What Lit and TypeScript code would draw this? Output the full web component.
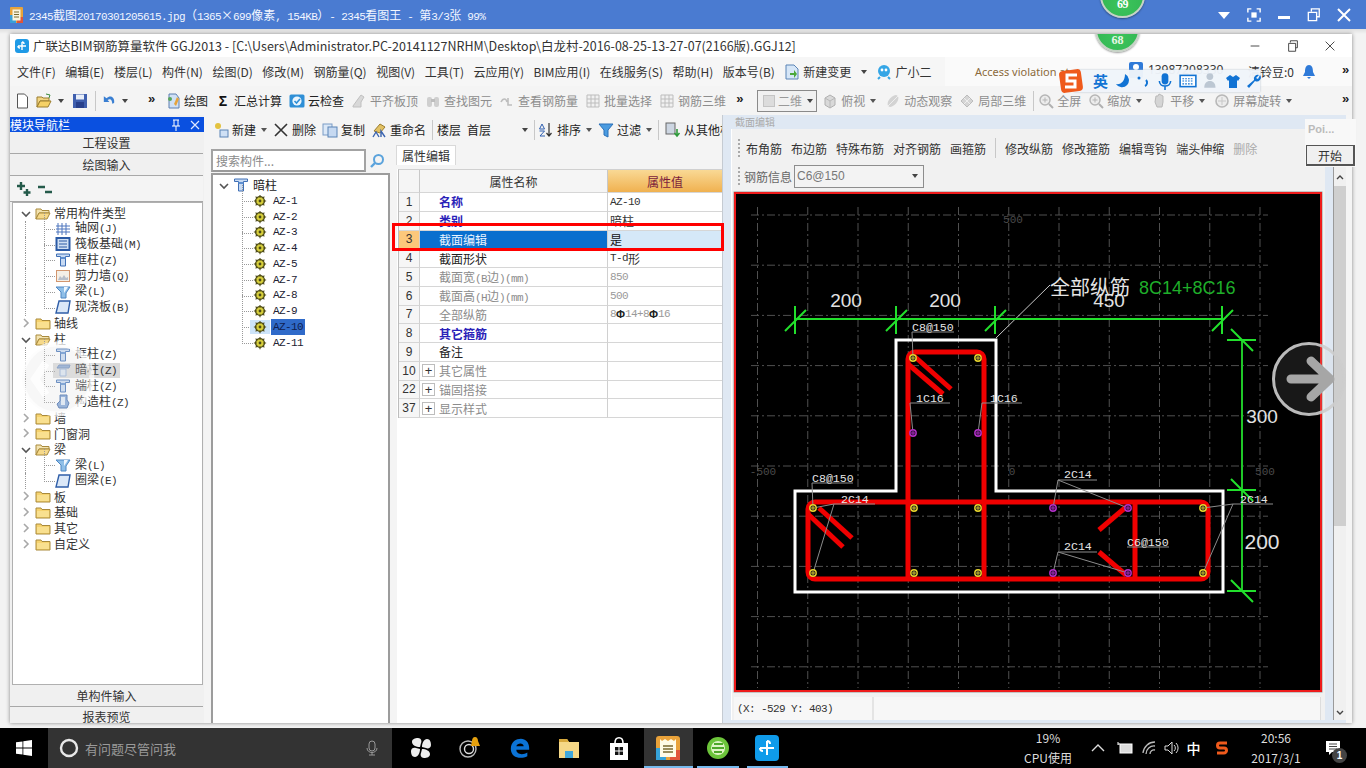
import { LitElement, html, css, svg } from 'lit';
import { customElement } from 'lit/decorators.js';

const ic = (body: unknown, w = 16, h = 16, vb = '0 0 16 16') =>
  html`<svg class="ic" width=${w} height=${h} viewBox=${vb}>${body}</svg>`;

// the original UI font has half-width latin, so latin runs get their own narrow class
const mix = (s: string) =>
  s.split(/([\x20-\x7e]+)/).filter(Boolean).map((p) => (/^[\x20-\x7e]/.test(p) ? html`<span class="a">${p}</span>` : p));

const folderShut = ic(svg`<path d="M1 4h5l1 1.500h8V14H1z" fill="#f6d36f" stroke="#a98a3c"/><path d="M2 7h12v6H2z" fill="#f9e08f"/>`);
const folderOpen = ic(svg`<path d="M1 4h5l1 1.500h7V8H4L1 14z" fill="#f3e3b0" stroke="#a98a3c"/><path d="M4 8h11l-3 6H1z" fill="#f6d98a" stroke="#a98a3c"/>`);
const column = ic(svg`<path d="M1.500 2h13v2.500h-4V14h-5V4.500h-4z" fill="#c7daf3" stroke="#3f6fb5"/><path d="M5.500 5h5v2h-5z" fill="#5e8fd0"/>`);
const hiddenCol = ic(svg`<path d="M2 6h12l1-3H4z" fill="#7d9fd0" stroke="#5a7fb8"/><path d="M5 7h6v7H5z" fill="#dbe7f7" stroke="#8aa9d5"/>`);
const axisGrid = ic(svg`<path d="M3 2v12M7 2v12M11 2v12M1 5h14M1 8h14M1 11h14" stroke="#4c74bd" fill="none"/>`);
const raft = ic(svg`<rect x="1.500" y="2" width="13" height="12" fill="#cfdff3" stroke="#2b5aa5" stroke-width="2"/><path d="M4 5h8M4 8h8M4 11h8" stroke="#2b5aa5"/>`);
const wall = ic(svg`<rect x="1.500" y="2.500" width="13" height="11" fill="#f4efe6" stroke="#d2966e"/><path d="M3 12l2-4 2 2 2-3 2 3 2-1v3z" fill="#b8bfc9"/>`);
const beam = ic(svg`<path d="M1 3h14l-4 6v5H6V8z" fill="#8fbfe8" stroke="#4c86c3"/><path d="M9 3l4 0-4 6z" fill="#eef6fd"/>`);
const slab = ic(svg`<path d="M4 2h11l-2 12H1z" fill="#dbe8f8" stroke="#2f5ea8" stroke-width="1.400"/>`);
const constr = ic(svg`<path d="M5 1h7v5l2 3-2 5H4L2 10l3-3z" fill="#7ea3d6" stroke="#3f69ab"/><path d="M6 3h4v8H6z" fill="#dfeaf8"/>`);
const gear = ic(svg`<circle cx="8" cy="8" r="5" fill="#d7cf3c" stroke="#4c4a16" stroke-width="1.600"/><circle cx="8" cy="8" r="1.600" fill="#4c4a16"/><path d="M8 1v3M8 12v3M1 8h3M12 8h3M3 3l2 2M11 11l2 2M13 3l-2 2M5 11l-2 2" stroke="#4c4a16" stroke-width="1.300"/>`, 14, 14);

const caretDown = ic(svg`<path d="M2 5l4 4 4-4" fill="none" stroke="#555" stroke-width="1.600"/>`, 12, 12, '0 0 12 12');
const caretRight = ic(svg`<path d="M4 2l4 4-4 4" fill="none" stroke="#a8a8a8" stroke-width="1.600"/>`, 12, 12, '0 0 12 12');
const drop = html`<i class="drop"></i>`;

const grayBox = ic(svg`<path d="M3 5l5-3 5 3v7l-5 3-5-3z" fill="#d9d9d9" stroke="#b0b0b0"/><path d="M3 5l5 3 5-3M8 8v7" fill="none" stroke="#b8b8b8"/>`);
const grayGlass = ic(svg`<circle cx="7" cy="7" r="5" fill="#ececec" stroke="#b5b5b5" stroke-width="1.400"/><path d="M11 11l4 4" stroke="#b0b0b0" stroke-width="2"/><path d="M4.500 7h5M7 4.500v5" stroke="#b5b5b5"/>`);
const grayHand = ic(svg`<path d="M4 9l1-6 2 0 1-2 2 1 2 1v6l-1 5H6z" fill="#d5d5d5" stroke="#b8b8b8"/>`);
const grayBino = ic(svg`<rect x="2" y="4" width="5" height="10" rx="2" fill="#cfcfcf"/><rect x="9" y="4" width="5" height="10" rx="2" fill="#cfcfcf"/><rect x="6" y="6" width="4" height="3" fill="#bdbdbd"/>`);
const grayTable = ic(svg`<path d="M2 2h12v12H2zM2 6h12M2 10h12M6 2v12M10 2v12" fill="#f1f1f1" stroke="#bdbdbd"/>`);
const grayRot = ic(svg`<circle cx="8" cy="8" r="6" fill="#ececec" stroke="#b8b8b8" stroke-width="1.600"/><path d="M8 4v8M4 8h8" stroke="#c8c8c8"/>`);

interface ToolItem { icon?: unknown; label: string; off?: boolean; caret?: boolean; }

const leftTools: ToolItem[] = [
  { icon: ic(svg`<path d="M4 1l7 0 3 4v10H4z" fill="#cfe0f5" stroke="#5d7fb0"/><path d="M9 11l3-7 2 2-3 7z" fill="#e6a33c"/><circle cx="5" cy="6" r="2" fill="#58a55a"/>`), label: '绘图' },
  { icon: html`<b class="sigma">Σ</b>`, label: '汇总计算' },
  { icon: ic(svg`<rect x="0.500" y="1.500" width="15" height="13" rx="1.500" fill="#2f8fd6"/><circle cx="8" cy="8" r="4.600" fill="#eaf5fd"/><path d="M5.500 8l2 2 3.500-4" stroke="#2f8fd6" stroke-width="1.600" fill="none"/>`), label: '云检查' },
  { icon: ic(svg`<path d="M2 13l5-7 3-4 3 2-3 5v5H2z" fill="#d8d8d8" stroke="#c0c0c0"/>`), label: '平齐板顶', off: true },
  { icon: grayBino, label: '查找图元', off: true },
  { icon: ic(svg`<path d="M2 9c2-4 5-4 6 0M9 5v7h4" stroke="#bdbdbd" stroke-width="1.600" fill="none"/>`), label: '查看钢筋量', off: true },
  { icon: grayTable, label: '批量选择', off: true },
  { icon: grayTable, label: '钢筋三维', off: true },
];

const rightTools: ToolItem[] = [
  { icon: grayBox, label: '俯视', off: true, caret: true },
  { icon: ic(svg`<ellipse cx="8" cy="8" rx="4" ry="7" transform="rotate(40 8 8)" fill="#d3d3d3"/><path d="M3 13L13 3" stroke="#eee"/>`), label: '动态观察', off: true },
  { icon: ic(svg`<path d="M8 2l6 6-6 6-6-6z" fill="#d5d5d5" stroke="#bcbcbc"/><path d="M5 5l6 6M11 5l-6 6" stroke="#eee"/>`), label: '局部三维', off: true },
];

const viewTools: ToolItem[] = [
  { icon: grayGlass, label: '全屏', off: true },
  { icon: grayGlass, label: '缩放', off: true, caret: true },
  { icon: grayHand, label: '平移', off: true, caret: true },
  { icon: grayRot, label: '屏幕旋转', off: true, caret: true },
];

const menus = ['文件(F)', '编辑(E)', '楼层(L)', '构件(N)', '绘图(D)', '修改(M)', '钢筋量(Q)', '视图(V)', '工具(T)', '云应用(Y)', 'BIM应用(I)', '在线服务(S)', '帮助(H)', '版本号(B)'];

interface TreeRow { label: string; icon?: unknown; open?: boolean; last?: boolean; guide?: boolean; hot?: boolean; }

const navTree: TreeRow[] = [
  { label: '常用构件类型', open: true },
  { label: '轴网(J)', icon: axisGrid, guide: true },
  { label: '筏板基础(M)', icon: raft, guide: true },
  { label: '框柱(Z)', icon: column, guide: true },
  { label: '剪力墙(Q)', icon: wall, guide: true },
  { label: '梁(L)', icon: beam, guide: true },
  { label: '现浇板(B)', icon: slab, guide: true, last: true },
  { label: '轴线' },
  { label: '柱', open: true },
  { label: '框柱(Z)', icon: column, guide: true },
  { label: '暗柱(Z)', icon: hiddenCol, guide: true, hot: true },
  { label: '端柱(Z)', icon: column, guide: true },
  { label: '构造柱(Z)', icon: constr, guide: true, last: true },
  { label: '墙' },
  { label: '门窗洞' },
  { label: '梁', open: true },
  { label: '梁(L)', icon: beam, guide: true },
  { label: '圈梁(E)', icon: slab, guide: true, last: true },
  { label: '板' },
  { label: '基础' },
  { label: '其它' },
  { label: '自定义' },
];

const members = ['AZ-1', 'AZ-2', 'AZ-3', 'AZ-4', 'AZ-5', 'AZ-7', 'AZ-8', 'AZ-9', 'AZ-10', 'AZ-11'];

interface PropRow { n: number; name: string; value?: unknown; kind?: string; plus?: boolean; sel?: boolean; }

const rebar = html`<b class="bar-mark">Φ</b>`;
const props: PropRow[] = [
  { n: 1, name: '名称', value: mix('AZ-10'), kind: 'key' },
  { n: 2, name: '类别', value: '暗柱', kind: 'key' },
  { n: 3, name: '截面编辑', value: '是', sel: true },
  { n: 4, name: '截面形状', value: mix('T-d形') },
  { n: 5, name: '截面宽(B边)(mm)', value: mix('850'), kind: 'dim' },
  { n: 6, name: '截面高(H边)(mm)', value: mix('500'), kind: 'dim' },
  { n: 7, name: '全部纵筋', value: html`${mix('8')}${rebar}${mix('14+8')}${rebar}${mix('16')}`, kind: 'dim' },
  { n: 8, name: '其它箍筋', kind: 'key' },
  { n: 9, name: '备注' },
  { n: 10, name: '其它属性', plus: true, kind: 'dim' },
  { n: 22, name: '锚固搭接', plus: true, kind: 'dim' },
  { n: 37, name: '显示样式', plus: true, kind: 'dim' },
];

const sectionTools = ['布角筋', '布边筋', '特殊布筋', '对齐钢筋', '画箍筋', '|', '修改纵筋', '修改箍筋', '编辑弯钩', '端头伸缩'];

// drawing data, in screen coordinates (the svg viewBox is offset to match)
const gridX = Array.from({ length: 11 }, (_, i) => 757.5 + i * 50.25);
const gridY = Array.from({ length: 10 }, (_, i) => 215 + i * 50.2);

const yellowDots = [[913, 358], [978, 358], [813, 508], [914, 508], [978, 508], [1203, 508], [813, 573], [914, 573], [978, 573], [1203, 573]];
const purpleDots = [[913, 433], [978, 433], [1053, 508], [1128, 508], [1053, 573], [1128, 573]];

const redLines = [
  [908, 502, 908, 579], [984, 502, 984, 579], [1135, 502, 1135, 579],
  [914, 356, 951, 389], [908, 364, 943, 394],
  [819, 508, 852, 538], [808, 514, 843, 547],
  [1126, 507, 1099, 530], [1099, 552, 1126, 575],
];

const labels: [string, number, number][] = [
  ['C8@150', 912, 331], ['1C16', 916, 402], ['1C16', 990, 402], ['C8@150', 812, 482],
  ['2C14', 841, 503], ['2C14', 1064, 478], ['2C14', 1064, 550], ['C6@150', 1127, 546], ['2C14', 1240, 503],
];

const rules = [
  [912, 332, 954, 332], [910, 403, 950, 403], [982, 403, 1022, 403], [812, 483, 853, 483],
  [834, 504, 875, 504], [1058, 480, 1097, 480], [1058, 552, 1097, 552], [1127, 547, 1169, 547], [1233, 504, 1273, 504],
];

const leaders = [
  [913, 358, 912, 332], [913, 433, 910, 403], [978, 433, 982, 403], [813, 508, 812, 483],
  [813, 508, 834, 504], [813, 573, 834, 504],
  [1053, 508, 1058, 480], [1128, 508, 1058, 480], [1053, 573, 1058, 552], [1128, 573, 1058, 552],
  [1203, 508, 1233, 504], [1203, 573, 1233, 504],
];

const xTicks = [795, 896, 995, 1222];
const yTicks = [340, 490, 591];

const dot = (x: number, y: number, ring: string, core: string) => svg`
  <circle cx=${x} cy=${y} r="3.200" fill=${core} stroke=${ring} stroke-width="1.400"/>
  <path d="M${x - 2} ${y}h4M${x} ${y - 2}v4" stroke=${ring} stroke-width=".8"/>`;

@customElement('section-canvas')
class SectionCanvas extends LitElement {
  static styles = css`
    :host { display: block; line-height: 0; }
    text { font-family: "Liberation Mono", monospace; }
    .sm { font-size: 11.6px; fill: #e4e4e4; }
    .dim { font-family: "Liberation Sans", sans-serif; fill: #e2e2e2; text-anchor: middle; }
    .cjk { font-family: "Noto Sans CJK SC", sans-serif; font-size: 20px; fill: #e4e4e4; }
    .axis { font-size: 11px; fill: #4a4a4a; text-anchor: middle; }
  `;

  render() {
    return html`<svg width="584" height="496" viewBox="736 194 584 496">
      <rect x="736" y="194" width="584" height="496" fill="#000"/>
      <g stroke="#505050" stroke-dasharray="8 3 2 3" fill="none">
        ${gridX.map((x) => svg`<line x1=${x} y1="207" x2=${x} y2="688"/>`)}
        ${gridY.map((y) => svg`<line x1="751" y1=${y} x2="1268" y2=${y}/>`)}
      </g>
      <text class="axis" x="1013" y="223">500</text>
      <text class="axis" x="763" y="475">-500</text>
      <text class="axis" x="1012" y="475">0</text>
      <text class="axis" x="1265" y="475">500</text>

      <path d="M896 340H996V491H1223V592H795V491H896Z" fill="none" stroke="#fff" stroke-width="3"/>

      <g fill="none" stroke="#f00000" stroke-width="5" stroke-linecap="round" stroke-linejoin="round">
        <rect x="808" y="502" width="400" height="77" rx="7"/>
        <path d="M908 502V359a7 7 0 0 1 7-7H977a7 7 0 0 1 7 7V502"/>
        ${redLines.map(([a, b, c, d]) => svg`<line x1=${a} y1=${b} x2=${c} y2=${d} stroke-linecap="butt"/>`)}
      </g>

      <g stroke="#8c8c8c" stroke-width="1" fill="none">
        ${rules.map(([a, b, c, d]) => svg`<line x1=${a} y1=${b} x2=${c} y2=${d}/>`)}
        ${leaders.map(([a, b, c, d]) => svg`<line x1=${a} y1=${b} x2=${c} y2=${d}/>`)}
        <path d="M996 338L1050 285" stroke="#c8c8c8"/>
      </g>

      ${yellowDots.map(([x, y]) => dot(x, y, '#e6d52c', '#222'))}
      ${purpleDots.map(([x, y]) => dot(x, y, '#b32fc8', '#301038'))}

      <g stroke="#22e02c" stroke-width="2" fill="none">
        <line x1="795" y1="319" x2="1222" y2="319"/>
        ${xTicks.map((x) => svg`<path d="M${x} 306V334M${x - 10} 331L${x + 11} 310"/>`)}
        <line x1="1242" y1="340" x2="1242" y2="591" stroke="#1fc828"/>
        ${yTicks.map((y) => svg`<path d="M1227 ${y}H1256M1231 ${y - 11}L1253 ${y + 11}"/>`)}
      </g>

      <text class="dim" x="846" y="307" font-size="19">200</text>
      <text class="dim" x="945" y="307" font-size="19">200</text>
      <text class="dim" x="1109" y="307" font-size="19">450</text>
      <text class="dim" x="1262" y="423" font-size="19">300</text>
      <text class="dim" x="1262" y="549" font-size="21">200</text>
      <text class="cjk" x="1050" y="295">全部纵筋</text>
      <text x="1139" y="294" font-size="18" fill="#1fae2a" style="font-family:'Liberation Sans',sans-serif">8C14+8C16</text>
      ${labels.map(([t, x, y]) => svg`<text class="sm" x=${x} y=${y}>${t}</text>`)}
    </svg>`;
  }
}

@customElement('app-root')
class AppRoot extends LitElement {
  static styles = css`
    :host {
      display: block; width: 1366px; height: 768px; position: relative; overflow: hidden;
      font-family: "Noto Sans CJK SC", sans-serif; font-size: 12px; color: #222; background: #f1f1f1;
    }
    * { box-sizing: border-box; }
    .ic { flex: none; display: block; }
    .a { font-family: "Liberation Mono", monospace; font-size: 11px; letter-spacing: -.6px; }
    .drop { flex: none; width: 0; height: 0; border: 3px solid transparent; border-top: 4px solid #444; border-bottom: 0; }

    /* viewer frame */
    .viewer { height: 29px; background: #4a7bd1; color: #f2f6ff; display: flex; align-items: center; padding: 0 14px 0 10px; }
    .viewer-title { font-size: 12px; margin-left: 6px; white-space: nowrap; }
    .viewer-btns { margin-left: auto; display: flex; align-items: center; gap: 15px; }
    .stage { height: 699px; padding: 5px 14px 5px 10px; background: linear-gradient(#dfdfdf, #f3f3f3 5px); }

    .window { position: relative; width: 1342px; height: 689px; background: #f5f5f5; overflow: hidden; box-shadow: 0 0 4px rgba(0,0,0,.45); }
    .wtitle { height: 23px; background: #fff; display: flex; align-items: center; padding-left: 5px; font-size: 12.5px; color: #333; white-space: nowrap; }
    .wtitle span { margin-left: 4px; }
    .wbtns { margin-left: auto; display: flex; align-items: center; width: 104px; justify-content: space-between; padding-right: 15px; }

    .menu { height: 29px; display: flex; align-items: center; gap: 9.5px; padding-left: 7px; white-space: nowrap; color: #333; background: #f6f6f6; }
    .menu-extra { display: flex; align-items: center; gap: 3px; }
    .notice { flex: 1; align-self: stretch; margin-left: 4px; padding-left: 30px; display: flex; align-items: center; background: #fafafa; }
    .notice .err { color: #8b6a3a; width: 153px; font-family: "Noto Sans", sans-serif; font-size: 11px; }
    .notice .user { width: 20px; align-self: flex-start; padding-top: 5px; }
    .notice .phone { color: #333; width: 96px; align-self: flex-start; padding-top: 4px; font-family: "Noto Sans", sans-serif; }
    .notice .beans { width: 53px; margin-left: 4px; }
    .chev { font-family: "Liberation Sans", sans-serif; font-weight: 700; font-size: 13px; line-height: 1; color: #222; padding-bottom: 5px; width: 10px; }
    .chev.wide { width: 17px; padding-left: 3px; }
    .notice .chev, .tools > .chev.end { margin-left: auto; }

    .tools { height: 29px; display: flex; align-items: center; gap: 7px; padding-left: 6px; white-space: nowrap; background: #f4f4f4; }
    .quick { display: grid; grid-template-columns: 20px 22px 14px 23px 6px 21px 26px; align-items: center; margin-right: -7px; }
    .ti { display: flex; align-items: center; gap: 3px; color: #222; }
    .ti.off { color: #8d8d8d; }
    .ti .drop { margin: 0 2px; border-top-color: #555; }
    .sigma { width: 16px; font: 700 14px "Liberation Sans", sans-serif; text-align: center; color: #111; }
    .sep { width: 1px; height: 20px; background: #c8c8c8; }
    .tools > .sep { margin-right: -3px; }
    .combo { width: 60px; height: 22px; border: 1px solid #8a8a8a; display: flex; align-items: center; gap: 3px; padding: 0 3px 0 5px; color: #999; background: #f1f1f1; margin-right: -2px; }
    .combo i.sw { width: 13px; height: 12px; background: #dcdcdc; border: 1px solid #c4c4c4; }
    .combo .drop { margin-left: 2px; }

    .main { display: flex; height: 608px; }

    /* module nav */
    .dock { width: 194px; display: flex; flex-direction: column; padding-top: 2px; background: #f0f0f0; }
    .dock-head { height: 15px; background: #0a50e0; color: #fff; display: flex; align-items: center; padding: 0 3px 0 0; font-size: 12px; line-height: 15px; gap: 7px; }
    .dock-head .ic:first-of-type { margin-left: auto; }
    .nav-btn { height: 22px; text-align: center; line-height: 21px; border-bottom: 1px solid #a8a8a8; background: #f0f0f0; color: #333; flex: none; margin-right: 1px; }
    .nav-btn.tight { height: 16px; line-height: 20px; overflow: hidden; border: 0; }
    .nav-tools { height: 26px; display: flex; align-items: center; gap: 5px; padding-left: 6px; background: #f4f4f4; border-bottom: 1px solid #a8a8a8; flex: none; margin-right: 1px; }
    .nav-tree { flex: 1; margin: 0 1px 0 2px; background: #fff; border: 1px solid #b0b0b0; padding-top: 2px; color: #333; }
    .node { position: relative; height: 15.75px; display: flex; align-items: center; gap: 3px; padding-left: 7px; white-space: nowrap; line-height: 15.75px; }
    .node.leaf { padding-left: 42px; gap: 4px; }
    .node.leaf::before { content: ""; position: absolute; left: 31px; top: -8px; width: 10px; height: 16px; border-left: 1px dotted #999; border-bottom: 1px dotted #999; }
    .node.guide::after { content: ""; position: absolute; left: 12px; top: 0; height: 16px; border-left: 1px dotted #999; }
    .node.hot { background: linear-gradient(#dadada, #dadada) 40px 0 / 67px 100% no-repeat; }
    .node.hot .ic { opacity: .85; }

    /* middle */
    .center { width: 518px; display: flex; flex-direction: column; background: #f4f4f4; }
    .ctools { height: 29px; display: flex; align-items: center; gap: 6px; padding-left: 9px; white-space: nowrap; flex: none; overflow: hidden; }
    .ctools > * { flex: none; }
    .ctools .ti { gap: 3px; }
    .ctools .ti .drop { margin: 0 0 0 2px; }
    .ctools .sep.pull { margin-right: -2px; }
    .ctools .sep.pull3 { margin-right: -3px; }
    .floor { width: 49px; }
    .panes { flex: 1; display: flex; min-height: 0; }
    .list-pane { width: 186px; margin-left: 7px; display: flex; flex-direction: column; padding-top: 5px; }
    .search { display: flex; align-items: center; height: 23px; flex: none; }
    .search-box { width: 155px; height: 23px; border: 2px solid #a3a3a3; border-bottom-color: #9a9a9a; background: #fff; color: #8a8a8a; padding-left: 3px; line-height: 19px; }
    .search .ic { margin-left: 3px; }
    .list-tree { flex: 1; margin-top: 1px; background: #fff; border: 1px solid #9c9c9c; border-width: 2px 2px 0 2px; padding-top: 1px; margin-right: 7px; width: 179px; }
    .root { height: 17px; display: flex; align-items: center; padding-left: 5px; gap: 3px; }
    .root span { margin-left: 1px; }
    .member { position: relative; height: 15.75px; display: flex; align-items: center; padding-left: 40px; color: #223; white-space: nowrap; }
    .member::before { content: ""; position: absolute; left: 29px; top: -8px; width: 10px; height: 16px; border-left: 1px dotted #999; border-bottom: 1px dotted #999; }
    .member .ic { position: relative; margin-right: 6px; }
    .member.sel .ic { background: #cde4fa; box-shadow: 3px 0 0 #cde4fa, -3px 0 0 #cde4fa; }
    .member.sel .tag { background: #2f6ac9; color: #102050; padding: 0 2px; margin-left: -2px; width: 34px; line-height: 16px; }

    .prop-pane { width: 325px; display: flex; flex-direction: column; background: #fff; }
    .tabs { height: 25px; background: #f4f4f4; display: flex; align-items: flex-end; padding-top: 1px; flex: none; }
    .tab { width: 60px; height: 20px; margin-bottom: 4px; margin-left: -1px; background: #fff; border: 1px solid #d9d9d9; border-bottom: 0; text-align: center; line-height: 19px; color: #333; }
    .ptable { width: 324px; margin-left: 1px; border-left: 1px solid #bdbdbd; border-top: 1px solid #d0d0d0; display: grid; grid-template-columns: 21px 188px 114px; grid-template-rows: 23px; grid-auto-rows: 18.75px; }
    .ptable > div { border-bottom: 1px solid #d6d6d6; display: flex; align-items: center; white-space: nowrap; overflow: hidden; }
    .ptable > .h { justify-content: center; background: #f5f5f5; border-right: 1px solid #c8c8c8; color: #333; }
    .ptable > .h.val { background: linear-gradient(#f9d995, #f0b150); color: #7b1c3c; border-right: 0; }
    .ptable > .num { justify-content: center; background: #f6f6f6; border-right: 1px solid #d0d0d0; font-family: "Liberation Sans", sans-serif; color: #333; }
    .ptable > .num.sel { background: #fcc87b; color: #333; }
    .nm { padding-left: 19px; border-right: 1px solid #d0d0d0; color: #222; }
    .nm.plus { padding-left: 2px; gap: 4px; }
    .box { width: 13px; height: 13px; border: 1px solid #bdbdbd; display: flex; align-items: center; justify-content: center; font: 400 13px/1 "Liberation Sans", sans-serif; color: #333; }
    .nm.key { color: #2a22b8; font-weight: 700; }
    .nm.dim { color: #8c8c8c; }
    .nm.sel { background: #0a6fce; color: #eaf4ff; }
    .vl { padding-left: 2px; color: #333; }
    .vl.dim { color: #9a9a9a; }
    .vl.sel { background: #d5e8f8; color: #111; }
    .bar-mark { color: #222; font-weight: 700; font-family: "Liberation Sans", sans-serif; font-size: 11px; }

    /* section editor */
    .sect { width: 624px; background: #dfe8f3; position: relative; padding: 3px 0 3px 8px; display: flex; flex-direction: column; border-left: 1px solid #c5cbd2; }
    .sect-title { height: 11px; line-height: 8px; font-size: 10px; color: #aaa; padding-left: 4px; flex: none; }
    .sect-body { width: 594px; flex: 1; background: #f1f1f1; display: flex; flex-direction: column; padding: 7px 4px 0 2px; border-left: 1px solid #fff; }
    .sect-tools { height: 24px; display: flex; align-items: center; gap: 9px; padding-left: 11px; flex: none; white-space: nowrap; color: #333; }
    .sect-tools .off { color: #aaa; }
    .grip { width: 2px; height: 18px; border-left: 2px dotted #aaa; margin-right: -3px; margin-left: -7px; }
    .sect-info { height: 26px; margin-top: 3px; display: flex; align-items: center; gap: 2px; padding-left: 4px; flex: none; color: #666; }
    .sect-info .grip { margin-left: 0; margin-right: 2px; }
    .select { width: 130px; height: 23px; border: 1px solid #8d8d8d; display: flex; align-items: center; padding: 0 5px 0 2px; font-family: "Liberation Sans", sans-serif; color: #777; background: #f3f3f3; }
    .select .drop { margin-left: auto; }
    .canvas { flex: none; margin-top: 3px; width: 588px; border: 2px solid #ee1c1c; box-shadow: 0 0 0 .5px #999; }
    .status { margin-top: 5px; height: 23px; display: flex; background: #f7f7f7; color: #333; }
    .status div { border-right: 1px solid #ddd; display: flex; align-items: center; padding-left: 3px; }
    .status .xy { width: 140px; border-right: 2px solid #e4e4e4; }
    .status .rest { flex: 1; }
    .sbar { position: absolute; right: 0; top: 51px; bottom: 3px; width: 13px; background: #f0f0f0; border-left: 1px solid #9a9a9a; display: flex; flex-direction: column; align-items: center; justify-content: space-between; padding: 6px 0 2px; }
    .thumb { position: absolute; left: 0; right: 0; top: 20px; height: 340px; background: #cfcfcf; }

    /* things lying over the window */
    .ball { position: absolute; border-radius: 50%; width: 45px; height: 45px; background: radial-gradient(circle at 50% 70%, #3cc45c, #2fb14f); border: 2px solid #c6d3c6; box-shadow: 0 1px 2px rgba(0,0,0,.4); color: #fff; font: 700 12px/1 "Liberation Serif", serif; display: flex; justify-content: center; }
    .ball.a { left: 1100px; top: -27px; align-items: flex-end; padding-bottom: 6px; }
    .ball.b { left: 1085px; top: -27px; align-items: flex-end; padding-bottom: 4px; color: #e8f7e8; }
    .sogou { position: absolute; left: 1058px; top: 67px; width: 203px; height: 27px; display: flex; align-items: center; }
    .sogou-bar { position: absolute; left: 16px; right: 1px; top: 3px; height: 22px; background: #f0f5fb; opacity: .96; box-shadow: 0 0 2px #b8c4d0; }
    .sogou-items { position: relative; display: flex; align-items: center; width: 100%; }
    .en { width: 18px; margin: 0 6px 0 4px; font-weight: 700; font-size: 15px; color: #1173d4; }
    .sogou-items .ic { margin-right: 5px; }
    .redbox { position: absolute; left: 392px; top: 223px; width: 332px; height: 28px; border: 3px solid #f00; }
    .popup { position: absolute; left: 1305px; top: 119px; width: 51px; height: 48px; background: #f8f8f8; padding: 4px 0 0 3px; color: #bbb; font: 700 11px "Liberation Sans", sans-serif; }
    .popup button { position: absolute; left: 1px; bottom: 1px; width: 49px; height: 21px; border: 1px solid #555; border-right-width: 2px; border-bottom-width: 2px; background: #f0f0f0; font: 12px "Noto Sans CJK SC", sans-serif; color: #333; padding: 0; }
    .flip { position: absolute; }
    .flip.prev { left: 19px; top: 341px; }
    .flip.next { left: 1271px; top: 341px; }

    /* taskbar */
    .taskbar { height: 40px; background: #000; display: flex; align-items: stretch; color: #eee; }
    .start { width: 48px; display: flex; align-items: center; justify-content: center; }
    .ask { width: 344px; background: #333; display: flex; align-items: center; padding-left: 11px; color: #9a9a9a; font-size: 13px; gap: 6px; }
    .ask .ic:last-child { margin-left: auto; margin-right: 12px; }
    .apps { display: flex; margin-left: 4px; }
    .app { position: relative; width: 49.5px; display: flex; align-items: center; justify-content: center; }
    .app.run::after { content: ""; position: absolute; left: 4px; right: 4px; bottom: 0; height: 2px; background: #76b9ed; }
    .app.now { background: #333; }
    .app.now::after { left: 0; right: 0; }
    .tray { margin-left: auto; display: grid; grid-template-columns: 70px 30px 24px 23px 22px 23px 34px 74px 40px; align-items: center; justify-items: center; margin-right: 13px; }
    .stack { text-align: center; line-height: 20px; font-size: 12px; color: #ddd; }
    .cn { font-size: 14px; font-weight: 500; color: #fff; }
    .bell { position: relative; }
    .badge { position: absolute; right: -6px; bottom: -7px; width: 15px; height: 15px; border-radius: 50%; background: #444; color: #fff; font: 700 10px/15px "Liberation Sans", sans-serif; text-align: center; }
  `;

  private tool(t: ToolItem) {
    return html`<span class="ti ${t.off ? 'off' : ''}">${t.icon}<span>${t.label}</span>${t.caret ? drop : ''}</span>`;
  }

  private node(r: TreeRow) {
    if (r.icon) {
      return html`<div class="node leaf ${r.guide ? 'guide' : ''} ${r.hot ? 'hot' : ''}">${r.icon}<span>${mix(r.label)}</span></div>`;
    }
    return html`<div class="node">${r.open ? caretDown : caretRight}${r.open ? folderOpen : folderShut}<span>${r.label}</span></div>`;
  }

  private viewerBar() {
    return html`<div class="viewer">
      ${ic(svg`<rect x="0" y="0" width="13" height="16" rx="1" fill="#e8a33a"/><rect y="8" width="6" height="8" fill="#3aa0d8"/><rect x="7" y="10" width="6" height="6" fill="#e0553a"/><rect x="2.500" y="2.500" width="8" height="11" fill="#f8f4e0"/><path d="M4 5h5M4 7.500h5M4 10h5" stroke="#7a6a30"/>`, 13, 16, '0 0 13 16')}
      <span class="viewer-title">${mix('2345截图20170301205615.jpg（1365×699像素, 154KB）- 2345看图王 - 第3/3张 99%')}</span>
      <div class="viewer-btns">
        ${ic(svg`<path d="M2 5h12l-6 7z" fill="#fff"/>`)}
        ${ic(svg`<path d="M1 5V1h4M11 1h4v4M15 11v4h-4M5 15H1v-4" fill="none" stroke="#fff" stroke-width="1.600"/><rect x="5" y="5" width="6" height="6" fill="#fff"/>`, 14, 14)}
        ${ic(svg`<rect x="2" y="9" width="12" height="3" fill="#fff"/>`)}
        ${ic(svg`<path d="M5 4V1h9v9h-3M1.500 5h9.500v9.500h-9.500z" fill="none" stroke="#fff" stroke-width="1.500"/>`, 14, 14)}
        ${ic(svg`<path d="M2 2l12 12M14 2L2 14" stroke="#fff" stroke-width="2"/>`)}
      </div>
    </div>`;
  }

  private menuBar() {
    return html`<div class="menu">
      ${menus.map((m) => html`<span>${m}</span>`)}
      <span class="menu-extra">${ic(svg`<path d="M2 1h8l4 4v10H2z" fill="#d6e6f7" stroke="#5b84b6"/><path d="M6 9h4V6l3 4-3 4v-3H6z" fill="#4aa83a"/>`)}<span>新建变更</span></span>${drop}
      <span class="menu-extra">${ic(svg`<circle cx="8" cy="7" r="6" fill="#35a6e6"/><circle cx="6" cy="6" r="1.400" fill="#fff"/><circle cx="10" cy="6" r="1.400" fill="#fff"/><path d="M4 13l-2 2M12 13l2 2" stroke="#35a6e6" stroke-width="2"/>`)}<span>广小二</span></span>
      <div class="notice">
        <span class="err">Access violation at</span>
        <span class="user">${ic(svg`<rect x="1" y="0" width="14" height="16" rx="2" fill="#2f7ad8"/><circle cx="8" cy="5" r="3" fill="#fff"/>`)}</span>
        <span class="phone">13987208330</span>
        <span class="beans">清铃豆:0</span>
        ${ic(svg`<path d="M8 1c3 0 4 3 4 7l2 4H2l2-4c0-4 1-7 4-7zM6 13h4l-2 2z" fill="#2f7ad8"/>`)}
        <span class="chev">»</span>
      </div>
    </div>`;
  }

  private toolBar() {
    return html`<div class="tools">
      <div class="quick">
        ${ic(svg`<path d="M1.500 1h7l3 3v11h-10z" fill="#fff" stroke="#555"/>`, 13, 16, '0 0 13 16')}
        ${ic(svg`<path d="M1 4h5l1 1h6v3H4L1 14z" fill="#f1d583" stroke="#9b7d2e"/><path d="M4 8h11l-3 6H1z" fill="#f6d166" stroke="#9b7d2e"/><path d="M10 1l4 1-1 3" fill="none" stroke="#3a8a3a"/>`)}
        ${drop}
        ${ic(svg`<rect x="1" y="1" width="14" height="14" fill="#3f5fae"/><rect x="4" y="1.500" width="8" height="5" fill="#e8eef8"/><rect x="4" y="9" width="8" height="6" fill="#28408c"/>`)}
        <i class="sep"></i>
        ${ic(svg`<path d="M3 3v6h6L7 7c3-2 5 0 5 4l2-1c1-6-4-9-8-5z" fill="#3a7fd2"/>`, 15, 16)}
        ${drop}
      </div>
      <span class="chev">»</span>
      ${leftTools.map((t) => this.tool(t))}
      <span class="chev wide">»</span>
      <div class="combo"><i class="sw"></i>二维${drop}</div>
      ${rightTools.map((t) => this.tool(t))}
      <i class="sep"></i>
      ${viewTools.map((t) => this.tool(t))}
      <span class="chev end">»</span>
    </div>`;
  }

  private dock() {
    return html`<div class="dock">
      <div class="dock-head"><span>模块导航栏</span>
        ${ic(svg`<path d="M3 1h6M4 1v6M8 1v6M2 7h8M6 7v5" stroke="#fff" fill="none"/>`, 12, 12, '0 0 12 12')}
        ${ic(svg`<path d="M2 2l8 8M10 2l-8 8" stroke="#dfe8ff" stroke-width="1.200"/>`, 12, 12, '0 0 12 12')}
      </div>
      <div class="nav-btn">工程设置</div>
      <div class="nav-btn">绘图输入</div>
      <div class="nav-tools">
        ${ic(svg`<path d="M5 1v8M1 5h8M11 8v7M7.500 11.500h7" stroke="#245a4a" stroke-width="2.400"/>`)}
        ${ic(svg`<path d="M1 6h7M8 11h7" stroke="#245a4a" stroke-width="2.400"/>`)}
      </div>
      <div class="nav-tree">${navTree.map((r) => this.node(r))}</div>
      <div class="nav-btn">单构件输入</div>
      <div class="nav-btn tight">报表预览</div>
    </div>`;
  }

  private centerTools() {
    return html`<div class="ctools">
      <span class="ti">${ic(svg`<circle cx="5" cy="4" r="3" fill="#e3c23f"/><rect x="7" y="8" width="8" height="7" fill="#cfe0f5" stroke="#5b84b6"/>`)}<span>新建</span>${drop}</span>
      <span class="ti">${ic(svg`<path d="M2 2l12 12M14 2L2 14" stroke="#333" stroke-width="1.600"/>`)}<span>删除</span></span>
      <span class="ti">${ic(svg`<rect x="1" y="2" width="9" height="11" fill="#dbe8f7" stroke="#7b9cc6"/><rect x="6" y="5" width="9" height="10" fill="#c6d9f1" stroke="#5b84b6"/>`)}<span>复制</span></span>
      <span class="ti">${ic(svg`<path d="M3 9l6-7 5 3-5 6z" fill="#e2c163" stroke="#9b7d2e"/><path d="M2 15l3-5 3 5M10 15V9l4 6" stroke="#3a64b0" stroke-width="1.400" fill="none"/>`)}<span>重命名</span></span>
      <i class="sep pull"></i>
      <span>楼层</span>
      <span class="floor">首层</span>${drop}
      <i class="sep pull3"></i>
      <span class="ti">${ic(svg`<path d="M4 2L1.500 7h5zM1.500 9h5L2 14h5" fill="none" stroke="#2f5fb0"/><path d="M11 1v13M8.500 11l2.500 3 2.500-3" fill="none" stroke="#333" stroke-width="1.200"/>`)}<span>排序</span>${drop}</span>
      <span class="ti">${ic(svg`<path d="M1 2h14L10 8v7l-4-2V8z" fill="#4a9be0" stroke="#2a70b8"/>`)}<span>过滤</span>${drop}</span>
      <i class="sep"></i>
      <span class="ti">${ic(svg`<rect x="1" y="1" width="9" height="11" fill="#cdd6e2" stroke="#666"/><path d="M12 7v6M9.500 11l2.500 3 2.500-3" stroke="#2f9a3c" stroke-width="1.600" fill="none"/>`)}<span>从其他构件</span></span>
    </div>`;
  }

  private listPane() {
    return html`<div class="list-pane">
      <div class="search">
        <div class="search-box">搜索构件...</div>
        ${ic(svg`<circle cx="9.500" cy="6.500" r="4.500" fill="none" stroke="#5ba3dc" stroke-width="2"/><path d="M6 10l-4 4" stroke="#5ba3dc" stroke-width="2.400"/>`, 16, 16)}
      </div>
      <div class="list-tree">
        <div class="root">${caretDown}${column}<span>暗柱</span></div>
        ${members.map((m) => html`<div class="member ${m === 'AZ-10' ? 'sel' : ''}">${gear}<span class="tag a">${m}</span></div>`)}
      </div>
    </div>`;
  }

  private propPane() {
    return html`<div class="prop-pane">
      <div class="tabs"><div class="tab">属性编辑</div></div>
      <div class="ptable">
        <div class="h"></div><div class="h">属性名称</div><div class="h val">属性值</div>
        ${props.map((p) => html`
          <div class="num ${p.sel ? 'sel' : ''}">${p.n}</div>
          <div class="nm ${p.kind ?? ''} ${p.plus ? 'plus' : ''} ${p.sel ? 'sel' : ''}">${p.plus ? html`<span class="box">+</span>` : ''}<span>${mix(p.name)}</span></div>
          <div class="vl ${p.kind === 'dim' ? 'dim' : ''} ${p.sel ? 'sel' : ''}">${p.value ?? ''}</div>`)}
      </div>
    </div>`;
  }

  private sectionEditor() {
    return html`<div class="sect">
      <div class="sect-title">截面编辑</div>
      <div class="sect-body">
        <div class="sect-tools">
          <i class="grip"></i>
          ${sectionTools.map((t) => (t === '|' ? html`<i class="sep"></i>` : html`<span>${t}</span>`))}
          <span class="off">删除</span>
        </div>
        <div class="sect-info"><i class="grip"></i><span>钢筋信息</span>
          <div class="select">C6@150${drop}</div>
        </div>
        <div class="canvas"><section-canvas></section-canvas></div>
        <div class="status"><div class="xy a">(X: -529 Y: 403)</div><div class="rest"></div></div>
      </div>
      <div class="sbar">
        <i class="thumb"></i>
        ${ic(svg`<path d="M2 7l3-3 3 3" fill="none" stroke="#444" stroke-width="1.400"/>`, 10, 10, '0 0 10 10')}
        ${ic(svg`<path d="M2 3l3 3 3-3" fill="none" stroke="#444" stroke-width="1.400"/>`, 10, 10, '0 0 10 10')}
      </div>
    </div>`;
  }

  private taskbar() {
    return html`<div class="taskbar">
      <div class="start">${ic(svg`<path d="M0 2.300l6.500-.9v6.200H0zM7.300 1.300L16 0v7.600H7.300zM0 8.400h6.500v6.200L0 13.700zM7.300 8.400H16V16l-8.700-1.300z" fill="#fff"/>`)}</div>
      <div class="ask">
        ${ic(svg`<circle cx="10" cy="10" r="8" fill="none" stroke="#e8e8e8" stroke-width="2.400"/>`, 20, 20, '0 0 20 20')}
        <span>有问题尽管问我</span>
        ${ic(svg`<rect x="5" y="1" width="6" height="10" rx="3" fill="none" stroke="#999"/><path d="M3 8c0 6 10 6 10 0M8 12v3M5 15h6" fill="none" stroke="#999"/>`, 16, 18)}
      </div>
      <div class="apps">
        <div class="app">${ic(svg`<path d="M10 10C6 10 2 8 2 5s3-4 6-4 4 3 3 5zM12 10c0-4 2-8 5-8s4 3 4 6-3 4-5 3zM12 12c4 0 8 2 8 5s-3 4-6 4-4-3-3-5zM10 12c0 4-2 8-5 8s-4-3-4-6 3-4 5-3z" fill="#eee"/>`, 22, 24, '0 0 22 22')}</div>
        <div class="app">${ic(svg`<circle cx="10" cy="13" r="8" fill="none" stroke="#bbb" stroke-width="1.400"/><circle cx="11" cy="13" r="4.500" fill="none" stroke="#ddd" stroke-width="1.400"/><path d="M17 1c2 0 3 2 3 4l2 5H13l1-5c0-2 1-4 3-4z" fill="#e5a10f"/>`, 24, 24, '0 0 24 24')}</div>
        <div class="app">${ic(svg`<path d="M2 13C2 5 8 2 13 2c5 0 9 4 9 10v2H8c0 5 7 6 12 3v4c-8 4-18 1-18-8zM8 10h8c0-4-7-4-8 0z" fill="#0b73d6"/>`, 22, 24, '0 0 24 24')}</div>
        <div class="app">${ic(svg`<path d="M2 3h8l2 3h10v16H2z" fill="#f5d887"/><path d="M2 3h8l2 3H2z" fill="#d8a93c"/><rect x="8" y="15" width="8" height="7" fill="#3fa7dc"/>`, 24, 24, '0 0 24 24')}</div>
        <div class="app">${ic(svg`<path d="M3 7h18v17H3z" fill="#fff"/><path d="M8 7c0-7 8-7 8 0" fill="none" stroke="#fff" stroke-width="1.600"/><path d="M8 11h3.500v3.500H8zM12.500 11H16v3.500h-3.500zM8 15.500h3.500V19H8zM12.500 15.500H16V19h-3.500z" fill="#111"/>`, 24, 26, '0 0 24 24')}</div>
        <div class="app run now">${ic(svg`<rect width="24" height="24" rx="3" fill="#e9a23a"/><rect y="12" width="10" height="12" fill="#36a3d9"/><rect x="14" y="14" width="10" height="10" fill="#e2553a"/><path d="M4 3l2 2 3-2 3 2 3-2 3 2 2-2v18H4z" fill="#fffbe6"/><path d="M7 10h10M7 13h10M7 16h10" stroke="#7a6a30" stroke-width="1.400"/>`, 24, 26, '0 0 24 24')}</div>
        <div class="app run">${ic(svg`<circle cx="12" cy="12" r="11" fill="#6cc43a"/><circle cx="12" cy="12" r="7" fill="#dff3c5"/><path d="M6 12h12M8 8h9M8 16h8" stroke="#4ea82a" stroke-width="2"/>`, 24, 26, '0 0 24 24')}</div>
        <div class="app run">${ic(svg`<rect width="24" height="26" rx="4" fill="#0f9bea"/><path d="M12 6v14M5 13h14M12 6a3 3 0 0 1 3 3M5 13a3 3 0 0 0 3 3" fill="none" stroke="#fff" stroke-width="2"/>`, 24, 26, '0 0 24 26')}</div>
      </div>
      <div class="tray">
        <div class="stack"><div>19%</div><div>CPU使用</div></div>
        ${ic(svg`<path d="M2 11l6-6 6 6" fill="none" stroke="#ddd" stroke-width="1.400"/>`)}
        ${ic(svg`<rect x="3" y="4" width="12" height="9" fill="#ddd" stroke="#fff"/><path d="M1 4h2M1 2v3" stroke="#fff"/>`)}
        ${ic(svg`<path d="M2 13a12 12 0 0 1 12-11M5 14a8 8 0 0 1 9-8M9 14a4 4 0 0 1 5-4" fill="none" stroke="#bbb" stroke-width="1.300"/>`)}
        ${ic(svg`<path d="M2 6h3l4-4v12l-4-4H2z" fill="none" stroke="#ddd"/><path d="M11 5a4 4 0 0 1 0 6M13 3a7 7 0 0 1 0 10" fill="none" stroke="#ddd"/>`)}
        <span class="cn">中</span>
        ${ic(svg`<path d="M13 3H6a2.500 2.500 0 0 0 0 5h4a2.500 2.500 0 0 1 0 5H3" fill="none" stroke="#ef5a1c" stroke-width="3"/>`)}
        <div class="stack"><div>20:56</div><div>2017/3/1</div></div>
        <div class="bell">${ic(svg`<path d="M1 1h14v11H7l-3 3v-3H1z" fill="#fff"/><path d="M4 4h8M4 6.500h8M4 9h8" stroke="#444"/>`)}<span class="badge">1</span></div>
      </div>
    </div>`;
  }

  render() {
    return html`
      ${this.viewerBar()}
      <div class="stage">
        <div class="window">
          <div class="wtitle">
            ${ic(svg`<rect x="0" y="0" width="14" height="14" rx="3" fill="#1f9ae6"/><path d="M7 3v8M3 7h8M7 3a2 2 0 0 1 2 2M3 7a2 2 0 0 0 2 2" stroke="#fff" stroke-width="1.400" fill="none"/>`, 14, 14, '0 0 14 14')}
            <span>广联达BIM钢筋算量软件 GGJ2013 - [C:\\Users\\Administrator.PC-20141127NRHM\\Desktop\\白龙村-2016-08-25-13-27-07(2166版).GGJ12]</span>
            <div class="wbtns">
              ${ic(svg`<path d="M3 8h10" stroke="#333"/>`, 14, 14)}
              ${ic(svg`<path d="M5 4V2h8v8h-2M3 5h8v9H3z" fill="none" stroke="#333"/>`, 14, 14)}
              ${ic(svg`<path d="M3 3l10 10M13 3L3 13" stroke="#333"/>`, 14, 14)}
            </div>
          </div>
          ${this.menuBar()}
          ${this.toolBar()}
          <div class="main">
            ${this.dock()}
            <div class="center">
              ${this.centerTools()}
              <div class="panes">${this.listPane()}${this.propPane()}</div>
            </div>
            ${this.sectionEditor()}
          </div>
          <div class="ball b">68</div>
        </div>
      </div>
      ${this.taskbar()}

      <div class="ball a">69</div>
      <div class="sogou">
        <div class="sogou-bar"></div>
        <div class="sogou-items">
          ${ic(svg`<rect x="2" y="2" width="22" height="22" rx="4" transform="rotate(-8 13 13)" fill="#ef5a1c"/><path d="M19 7H9v6h8v6H7" fill="none" stroke="#fff" stroke-width="3"/>`, 26, 26, '0 0 26 26')}
          <span class="en">英</span>
          ${ic(svg`<path d="M11 1a7 7 0 1 1-9 10c5 1 9-3 9-10z" fill="#1173d4"/>`)}
          ${ic(svg`<circle cx="4" cy="5" r="1.500" fill="#1173d4"/><path d="M11 7c2 2 1 5-1 6" fill="none" stroke="#1173d4" stroke-width="2"/>`)}
          ${ic(svg`<rect x="5" y="1" width="6" height="10" rx="3" fill="#1173d4"/><path d="M3 8c0 6 10 6 10 0M8 13v3" fill="none" stroke="#1173d4" stroke-width="1.400"/>`, 18, 18)}
          ${ic(svg`<rect x="1" y="3" width="14" height="10" fill="#fff" stroke="#1173d4" stroke-width="1.400"/><path d="M3 6h10M3 8h10M3 10.500h10" stroke="#1173d4" stroke-dasharray="1.500 1"/>`, 18, 18)}
          ${ic(svg`<circle cx="7" cy="4" r="3" fill="#bcc7d3"/><path d="M2 14c0-4 2-6 5-6s5 2 5 6z" fill="#bcc7d3"/>`, 18, 18)}
          ${ic(svg`<path d="M5 2l3 2 3-2 4 3-2 3-1-1v8H4V7L3 8 1 5z" fill="#1173d4"/>`)}
          ${ic(svg`<path d="M14 2a4 4 0 0 1-5 6l-6 7-2-2 7-6a4 4 0 0 1 5-5L10 5l2 1z" fill="#1173d4"/>`)}
        </div>
      </div>

      <div class="redbox"></div>
      <div class="popup">Poi...<button>开始</button></div>

      <svg class="flip prev" width="76" height="76" viewBox="0 0 76 76">
        <circle cx="38" cy="38" r="35" fill="rgba(225,225,225,.28)" stroke="rgba(255,255,255,.7)" stroke-width="5"/>
        <path d="M27 22L16 38l11 16" fill="none" stroke="rgba(255,255,255,.75)" stroke-width="8"/>
      </svg>
      <svg class="flip next" width="76" height="76" viewBox="0 0 76 76">
        <circle cx="38" cy="38" r="35.500" fill="rgba(200,200,200,.12)" stroke="rgba(205,205,205,.9)" stroke-width="3"/>
        <path d="M20 38h36M40 20l19 18-19 18" fill="none" stroke="#a6a6a6" stroke-width="9" stroke-linecap="round" stroke-linejoin="round"/>
      </svg>
    `;
  }
}
